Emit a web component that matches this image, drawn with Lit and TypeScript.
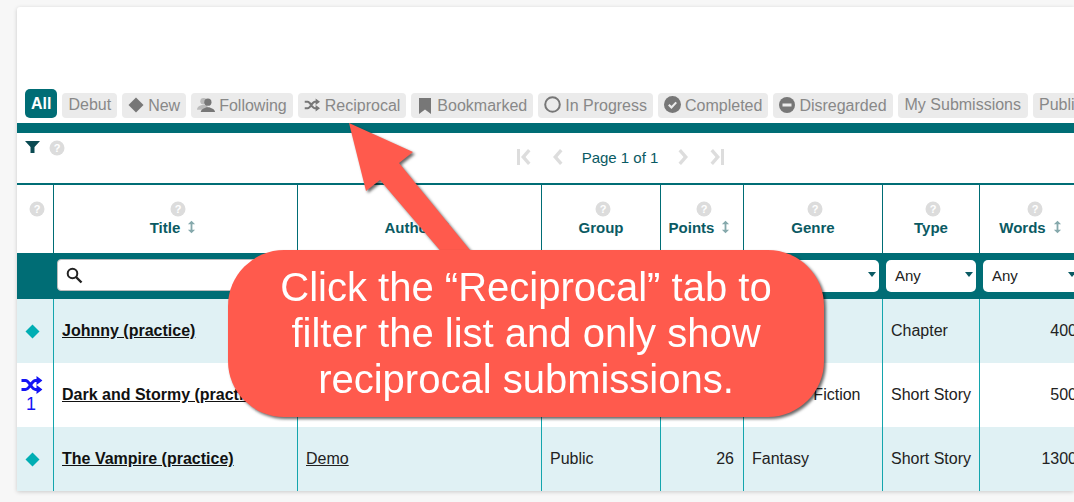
import { LitElement, html, css, svg } from "lit";
import { customElement } from "lit/decorators.js";

const q = html`<svg class="q" viewBox="0 0 16 16"><circle cx="8" cy="8" r="7.5" fill="#dcdcdc"/><text x="8" y="12" text-anchor="middle" font-family="Liberation Sans" font-weight="700" font-size="11" fill="#fff">?</text></svg>`;
const sort = html`<svg class="sort" viewBox="0 0 10 14"><path d="M5 0 9 4H6v6h3l-4 4-4-4h3V4H1z" fill="#86a9ac"/></svg>`;
const shuffle = (c: string) => svg`<path d="M1 4.500h4c4 0 6 9 10 9h3M1 13.500h4c4 0 6-9 10-9h3" fill="none" stroke="${c}" stroke-width="3"/><path d="M16 0 22 4.500 16 9zM16 9 22 13.500 16 18z" fill="${c}"/>`;

const tabs: [string, any, string][] = [
  ["Debut", null, "up"],
  ["New", html`<svg class="ti" style="width:16px" viewBox="0 0 16 16"><path d="M8 .5 15.500 8 8 15.500.5 8z" fill="#777"/></svg>`, ""],
  ["Following", html`<svg class="ti" style="width:18px" viewBox="0 0 19 16"><circle cx="7" cy="4" r="3.500" fill="#bbb"/><path d="M0 13c0-3 3-5 7-5s5 2 5 5z" fill="#bbb"/><circle cx="11.500" cy="5" r="3.800" fill="#777"/><path d="M4 15.500c0-1 .5-2.500 2.500-3.500l3.500-1.500h3l3.500 1.500c2 1 2.500 2.500 2.500 3.500z" fill="#777"/></svg>`, ""],
  ["Reciprocal", html`<svg class="ti" style="width:16px;margin-right:1px" viewBox="0 0 22 18">${shuffle("#777")}</svg>`, ""],
  ["Bookmarked", html`<svg class="ti" style="width:12px;margin:0 2px 0 2px" viewBox="0 0 12 16"><path d="M0 0h12v16l-6-4.500L0 16z" fill="#777"/></svg>`, ""],
  ["In Progress", html`<svg class="ti" style="width:17px;height:17px" viewBox="0 0 17 17"><circle cx="8.500" cy="8.500" r="7.300" fill="none" stroke="#777" stroke-width="2"/></svg>`, ""],
  ["Completed", html`<svg class="ti" style="width:17px;height:17px" viewBox="0 0 16 16"><circle cx="8" cy="8" r="8" fill="#777"/><path d="M4.500 8.200 7 10.700l4.500-4.700" fill="none" stroke="#ebebeb" stroke-width="2"/></svg>`, ""],
  ["Disregarded", html`<svg class="ti" style="width:16px" viewBox="0 0 16 16"><circle cx="8" cy="8" r="8" fill="#777"/><rect x="3.500" y="6.500" width="9" height="3" fill="#ebebeb"/></svg>`, ""],
  ["My Submissions", null, "up wide"],
  ["Public", null, "up"],
];

const cols = [36, 244, 244, 119, 83, 139, 97, 107];
const heads: [string, boolean][] = [["Title", true], ["Author", true], ["Group", false], ["Points", true], ["Genre", false], ["Type", false], ["Words", true]];

const diamond = html`<svg class="dia" viewBox="0 0 16 16"><path d="M8 .5 15.500 8 8 15.500.5 8z" fill="#00aeb3"/></svg>`;
const rows = [
  { mark: diamond, t: "Johnny (practice)", a: "Demo", g: "Public", p: "18", ge: "Fantasy", ty: "Chapter", w: "400" },
  { mark: html`<svg class="shuf" viewBox="0 0 22 18">${shuffle("#1414f5")}</svg><div class="n">1</div>`, t: "Dark and Stormy (practice)", a: "Demo", g: "Public", p: "21", ge: "Science Fiction", ty: "Short Story", w: "500" },
  { mark: diamond, t: "The Vampire (practice)", a: "Demo", g: "Public", p: "26", ge: "Fantasy", ty: "Short Story", w: "1300" },
];

@customElement("app-root")
export class AppRoot extends LitElement {
  static styles = css`
    :host { display: block; width: 1074px; height: 502px; overflow: hidden; position: relative; background: #f7f7f7; font-family: "Liberation Sans", Arial, sans-serif; }
    .card { margin: 7px 0 0 17px; height: 484px; background: #fff; box-shadow: 0 1px 4px rgba(0,0,0,.18); border-radius: 3px 0 0 0; display: flex; flex-direction: column; overflow: hidden; }
    .tabs { display: flex; align-items: flex-end; gap: 5px; padding: 82px 0 5px 8px; white-space: nowrap; }
    .tab { flex: none; display: flex; align-items: center; gap: 4px; height: 25px; padding: 0 6px; background: #ebebeb; color: #888; font-size: 16px; border-radius: 4px; box-sizing: border-box; }
    .tab.up { padding-bottom: 2px; }
    .tab.wide { padding-left: 7px; padding-right: 7px; }
    .tab .ti { margin-bottom: 2px; }
    .tab.all { height: 29px; padding: 0 6px; background: #006d75; color: #fff; font-weight: 700; border-radius: 5px; }
    .ti { height: 16px; flex: none; }
    .bar { flex: none; height: 10px; background: #006d75; }
    .tools { flex: none; height: 50px; position: relative; display: flex; justify-content: center; }
    .filter { display: flex; align-items: center; gap: 9px; position: absolute; left: 8px; top: 7px; }
    .filter .f { width: 15px; height: 12px; margin-top: -3px; }
    .q { width: 16px; height: 16px; display: block; }
    .pager { display: flex; align-items: center; height: 49px; color: #0a5a63; font-size: 15px; margin-left: 150px; }
    .pager svg { height: 16px; display: block; margin-top: -2px; }
    table { border-collapse: separate; border-spacing: 0; table-layout: fixed; width: 1069px; flex: none; }
    th, td { padding: 0; box-sizing: border-box; }
    .hd th { height: 70px; border-top: 2px solid #006d75; border-left: 1px solid #006d75; vertical-align: top; padding-top: 16px; color: #0a5a63; font-size: 15px; font-weight: 700; }
    .hd th:first-child { border-left: 0; }
    .hd .q { margin: 0 auto 1px; transform: translateX(2px); }
    .hd .lab { display: flex; justify-content: center; align-items: center; gap: 7px; height: 18px; }
    .sort { width: 9px; height: 14px; margin-right: 5px; }
    .fl td { height: 46px; background: #006d75; padding: 6px 3px 0 4px; vertical-align: top; }
    .fl td:last-child { padding-right: 7px; }
    .search { display: flex; align-items: center; height: 32px; box-sizing: border-box; background: #fff; border: 1px solid #bbb; border-radius: 4px; padding-left: 8px; }
    .search svg { width: 17px; height: 17px; }
    .sel { display: flex; align-items: center; justify-content: space-between; height: 32px; margin-top: 1px; box-sizing: border-box; background: #fff; border-radius: 5px; padding: 0 3px 1px 9px; font-size: 15px; color: #222; }
    .caret { width: 0; height: 0; border-left: 4.500px solid transparent; border-right: 4.500px solid transparent; border-top: 5px solid #0a5a63; margin-top: -2px; }
    .row td { height: 64px; border-left: 1px solid #14a5ad; font-size: 16px; color: #222; padding: 0 8px; white-space: nowrap; overflow: hidden; }
    .row td:first-child { border-left: 0; padding: 0 5px 0 0; text-align: center; }
    .row.alt td { background: #e0f1f4; }
    .row:last-child td { border-bottom: 1px solid #14a5ad; height: 65px; }
    .row td.num { text-align: right; padding-right: 9px; }
    .row .title { font-weight: 700; color: #111; text-decoration: underline; }
    .row .author { color: #222; text-decoration: underline; }
    .dia { width: 15px; height: 15px; display: block; margin: 0 auto; }
    .shuf { width: 22px; height: 18px; display: block; margin: -2px auto 1px; transform: translateX(-1.500px); }
    .n { color: #1414f5; font-size: 18px; line-height: 18px; transform: translateX(-1.500px); }
    .over { position: absolute; left: 0; top: 0; width: 1074px; height: 502px; filter: drop-shadow(2px 2px 1.500px rgba(0,0,0,.6)); pointer-events: none; }
    .callout { position: absolute; left: 228px; top: 250px; width: 596px; height: 167px; box-sizing: border-box; padding-top: 14px; background: #ff5a4d; border-radius: 56px; color: #fff; font-size: 40px; line-height: 46px; text-align: center; filter: drop-shadow(2px 2px 1.500px rgba(0,0,0,.6)); }
  `;

  render() {
    return html`
      <div class="card">
        <div class="tabs">
          <div class="tab all">All</div>
          ${tabs.map(([l, i, c]) => html`<div class="tab ${c}">${i}<span>${l}</span></div>`)}
        </div>
        <div class="bar"></div>
        <div class="tools">
          <div class="filter">
            <svg class="f" viewBox="0 0 15 12"><path d="M0 0h15L9.500 6V12H5.500V6z" fill="#0a4a52"/></svg>
            ${q}
          </div>
          <div class="pager">
            <svg style="width:14px;margin-right:21px" viewBox="0 0 14 14" preserveAspectRatio="none"><path d="M0 0h3v14H0zM11 0l2.500 2-5 5 5 5-2.500 2-7-7z" fill="#ddd"/></svg>
            <svg style="width:11px;margin-right:19px" viewBox="0 0 11 14" preserveAspectRatio="none"><path d="M8 0l2.500 2-5 5 5 5L8 14 1 7z" fill="#ddd"/></svg>
            <span>Page 1 of 1</span>
            <svg style="width:11px;margin-left:20px" viewBox="0 0 11 14" preserveAspectRatio="none"><path d="M3 0 .5 2l5 5-5 5L3 14l7-7z" fill="#ddd"/></svg>
            <svg style="width:14px;margin-left:21px" viewBox="0 0 14 14" preserveAspectRatio="none"><path d="M11 0h3v14h-3zM3 0 .5 2l5 5-5 5L3 14l7-7z" fill="#ddd"/></svg>
          </div>
        </div>
        <table>
          <colgroup>${cols.map((w) => html`<col style="width:${w}px" />`)}</colgroup>
          <tr class="hd">
            <th>${q}</th>
            ${heads.map(([l, s]) => html`<th>${q}<div class="lab"><span>${l}</span>${s ? sort : ""}</div></th>`)}
          </tr>
          <tr class="fl">
            <td></td>
            <td><div class="search"><svg viewBox="0 0 17 17"><circle cx="6.500" cy="6.500" r="4.800" fill="none" stroke="#222" stroke-width="2"/><path d="M10 10l5.500 5.500" stroke="#222" stroke-width="2.400"/></svg></div></td>
            <td><div class="search"></div></td>
            ${["Any", "Any", "Any", "Any", "Any"].map((v) => html`<td><div class="sel"><span>${v}</span><i class="caret"></i></div></td>`)}
          </tr>
          ${rows.map((r, i) => html`
            <tr class="row ${i % 2 === 0 ? "alt" : ""}">
              <td>${r.mark}</td>
              <td><span class="title">${r.t}</span></td>
              <td><span class="author">${r.a}</span></td>
              <td>${r.g}</td>
              <td class="num">${r.p}</td>
              <td>${r.ge}</td>
              <td>${r.ty}</td>
              <td class="num">${r.w}</td>
            </tr>`)}
        </table>
      </div>
      <svg class="over" viewBox="0 0 1074 502"><path d="M349 123 413 152 399 163 474 255H444L380 180 366 191z" fill="#ff5a4d"/></svg>
      <div class="callout">Click the “Reciprocal” tab to<br />filter the list and only show<br />reciprocal submissions.</div>
    `;
  }
}
